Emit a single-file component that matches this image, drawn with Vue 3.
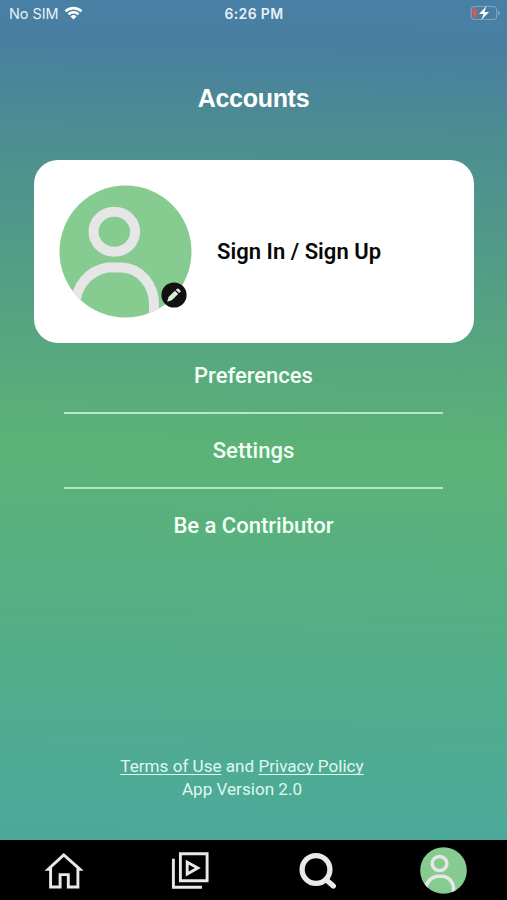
<template>
    <div class="screen">
        <header class="status">
            <div class="carrier">
                <span>No SIM</span>
                <svg width="19" height="14" viewBox="0 0 19 14" fill="#fff">
                    <path d="M.6 4.4a12.7 12.7 0 0 1 17.800 0l-1.800 1.900a10.100 10.100 0 0 0-14.200 0z" />
                    <path d="M3.600 7.500a8.400 8.400 0 0 1 11.800 0l-1.800 1.800a5.800 5.800 0 0 0-8.200 0z" />
                    <path d="M6.500 10.500a4.300 4.300 0 0 1 6 0l-3 3z" />
                </svg>
            </div>
            <div class="time">6:26 PM</div>
            <svg class="battery" width="31" height="16" viewBox="0 0 31 16">
                <rect x="1.200" y="1.500" width="25.500" height="13" rx="3.500" fill="none" stroke="#79a5bf" stroke-width="1.200" />
                <path d="M28 5.500v5q2-.8 2-2.500t-2-2.500z" fill="#79a5bf" />
                <rect x="2.800" y="3.500" width="4" height="9" rx="1" fill="#e5544c" />
                <path d="M16.500 1 9 9h4.600l-2.400 6L19 7h-4.600z" fill="#fff" />
            </svg>
        </header>

        <h1 class="title">Accounts</h1>

        <section class="card">
            <div class="photo">
                <svg width="133" height="133" viewBox="0 0 133 133">
                    <clipPath id="photo-clip"><circle cx="66.500" cy="66.500" r="66" /></clipPath>
                    <g clip-path="url(#photo-clip)">
                        <rect width="133" height="133" fill="#86cb8f" />
                        <g fill="none" stroke="#e6e6e6" stroke-width="10">
                            <ellipse cx="55.300" cy="46.800" rx="20.800" ry="20" />
                            <path d="M16.500 133v-12a38 38 0 0 1 32-38.500h14a33 37 0 0 1 32.500 38.500v12" />
                        </g>
                    </g>
                </svg>
                <svg class="edit" width="26" height="26" viewBox="0 0 26 26">
                    <circle cx="13" cy="13" r="12.600" fill="#111" />
                    <path d="m6.200 19.800 1.300-4.800 6.400-6.200 3.300 3.300-6.400 6.200z" fill="#d5efd5" />
                    <path d="m14.800 7.900 1.200-1.100q.8-.6 1.600 0l1.700 1.600q.7.800 0 1.600l-1.200 1.100z" fill="#e6e6e6" />
                </svg>
            </div>
            <div class="sign">Sign In / Sign Up</div>
        </section>

        <nav class="menu">
            <a v-for="item in items" :key="item" class="item">{{ item }}</a>
        </nav>

        <footer class="legal">
            <div><u>Terms of Use</u> and <u>Privacy Policy</u></div>
            <div>App Version 2.0</div>
        </footer>

        <nav class="tabs">
            <div class="tab">
                <svg width="40" height="40" viewBox="0 0 40 40" fill="none" stroke="#e9e9e9" stroke-width="2.900">
                    <path d="M20.800 4.900 5.200 19.300h2.400V37h9.500V24.600h8.200V37h9.600V19.300h2.100z" />
                </svg>
            </div>
            <div class="tab">
                <svg width="40" height="40" viewBox="0 0 40 40" fill="none" stroke="#e9e9e9" stroke-width="2.900">
                    <path d="M10.400 3.800h26.700v26.900H10.400zM3.400 8.700V37.200h28.500" />
                    <path d="M17.200 12.200v11.800l10.600-5.900z" />
                </svg>
            </div>
            <div class="tab">
                <svg width="40" height="40" viewBox="0 0 40 40" fill="none" stroke="#e9e9e9">
                    <circle cx="19" cy="19.500" r="13.900" stroke-width="5.300" />
                    <path d="m29.500 30 6.800 5.900" stroke-width="5.300" stroke-linecap="round" />
                </svg>
            </div>
            <div class="tab">
                <svg width="47" height="47" viewBox="0 0 133 133">
                    <clipPath id="tab-clip"><circle cx="66.500" cy="66.500" r="66" /></clipPath>
                    <g clip-path="url(#tab-clip)">
                        <rect width="133" height="133" fill="#86cb8f" />
                        <g fill="none" stroke="#e6e6e6" stroke-width="10">
                            <ellipse cx="55.300" cy="46.800" rx="20.800" ry="20" />
                            <path d="M16.500 133v-12a38 38 0 0 1 32-38.500h14a33 37 0 0 1 32.500 38.500v12" />
                        </g>
                    </g>
                </svg>
            </div>
        </nav>
    </div>
</template>

<script setup>
const items = ['Preferences', 'Settings', 'Be a Contributor']
</script>

<style>
body {
    margin: 0;
}
</style>

<style scoped>
.screen {
    height: 900px;
    box-sizing: border-box;
    display: flex;
    flex-direction: column;
    background: linear-gradient(181.2deg, #487fa5 0, #487fa0 50px, #4c8b93 125px, #5bb376 455px, #4ba99b 850px);
    font-family: Roboto, sans-serif;
    color: #f4fff6;
}

.status {
    height: 27px;
    padding: 0 6px 0 9px;
    display: grid;
    grid-template-columns: 1fr auto 1fr;
    align-items: center;
    font-family: Inter, sans-serif;
    font-size: 14.4px;
    color: #e6f1f8;
}

.carrier {
    display: flex;
    align-items: center;
    gap: 5px;
}

.carrier svg {
    margin-top: -2px;
}

.time {
    margin-left: -2px;
    font-weight: 600;
    font-size: 14px;
    letter-spacing: 0.35px;
}

.battery {
    justify-self: end;
    margin-top: -1px;
}

.title {
    margin: 56px 0 0;
    height: 30px;
    line-height: 30px;
    text-align: center;
    font-family: "Liberation Sans", Arial, sans-serif;
    font-size: 25px;
    font-weight: 700;
    letter-spacing: -0.3px;
    color: #fff;
}

.card {
    margin: 47px 33px 0 34px;
    height: 183px;
    box-sizing: border-box;
    padding-left: 25px;
    border-radius: 24px;
    background: #fff;
    display: flex;
    align-items: center;
}

.photo {
    position: relative;
    height: 133px;
}

.edit {
    position: absolute;
    left: 102px;
    bottom: 10px;
}

.sign {
    margin-left: 25px;
    font-size: 22px;
    font-weight: 600;
    letter-spacing: 0.03px;
    color: #080808;
}

.menu {
    margin: -4px 64px 0;
}

.item {
    display: block;
    height: 73px;
    line-height: 73px;
    text-align: center;
    font-size: 22px;
    font-weight: 500;
}

.item + .item {
    border-top: 2px solid #b9e5c4;
}

.legal {
    margin: auto 0 39px;
    padding-right: 23px;
    text-align: center;
    font-size: 17.1px;
    line-height: 23px;
    color: #dff8ee;
}

.legal u {
    text-underline-offset: 2px;
    text-decoration-skip-ink: none;
}

.tabs {
    height: 60px;
    background: #000;
    display: grid;
    grid-template-columns: repeat(4, 1fr);
}

.tab {
    display: flex;
    align-items: center;
    justify-content: center;
}
</style>
